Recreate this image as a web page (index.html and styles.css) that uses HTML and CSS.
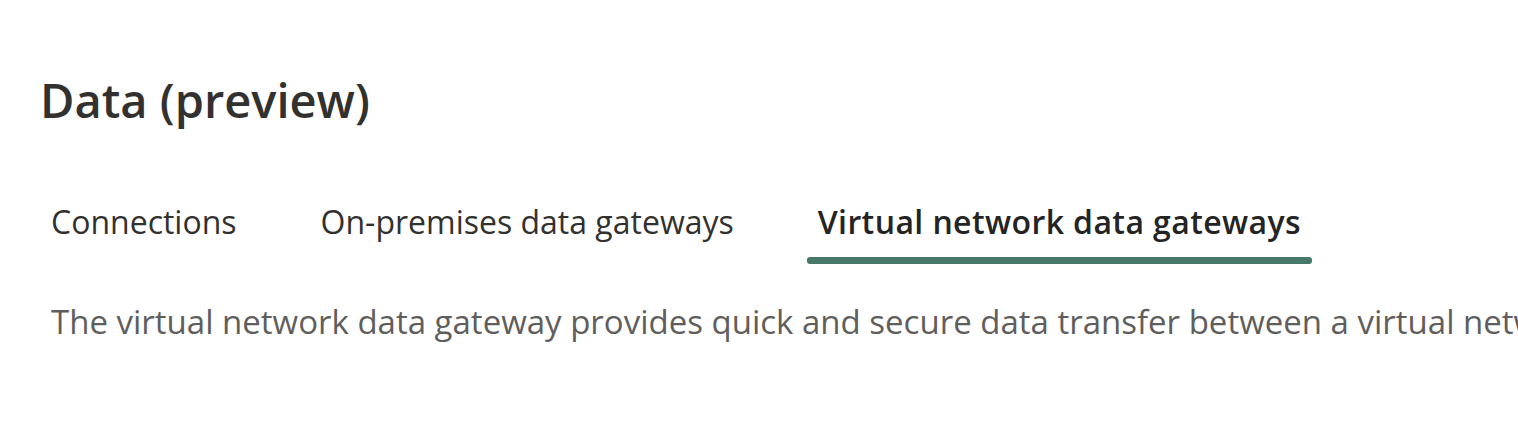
FILE: index.html
```html
<!DOCTYPE html>
<html lang="en">
<head>
  <meta charset="UTF-8">
  <meta name="viewport" content="width=device-width, initial-scale=1.0">
  <title>Data (preview)</title>
  <link rel="stylesheet" href="styles.css">
</head>
<body>
  <div class="page">
    <h1 class="page-title">Data (preview)</h1>

    <nav class="tabs">
      <div class="tab">Connections</div>
      <div class="tab">On-premises data gateways</div>
      <div class="tab active">Virtual network data gateways</div>
    </nav>

    <p class="description">The virtual network data gateway provides quick and secure data transfer between a virtual network and cloud data services.</p>
  </div>
</body>
</html>
```

FILE: styles.css
```css
body {
  margin: 0;
  font-family: "Open Sans", "Noto Sans", sans-serif;
  background-color: #ffffff;
  color: #323130;
  overflow: hidden;
}
.page {
  padding: 64px 0 0 40px;
}
.page-title {
  margin: 0;
  font-size: 47px;
  font-weight: 600;
  line-height: 72px;
  color: #323130;
}
.tabs {
  display: flex;
  gap: 84px;
  margin-top: 58px;
  padding-left: 11px;
}
.tab {
  font-size: 32px;
  line-height: 56px;
  color: #323130;
}
.tab.active {
  font-weight: 600;
  letter-spacing: 0.4px;
  color: #242424;
}
.tab.active::after {
  content: "";
  display: block;
  height: 7px;
  border-radius: 3px;
  background-color: #47786a;
  margin: 7px -11px 0;
}
.description {
  margin: 36px 0 0 11px;
  font-size: 33px;
  line-height: 44px;
  color: #605e5c;
  white-space: nowrap;
}
```
